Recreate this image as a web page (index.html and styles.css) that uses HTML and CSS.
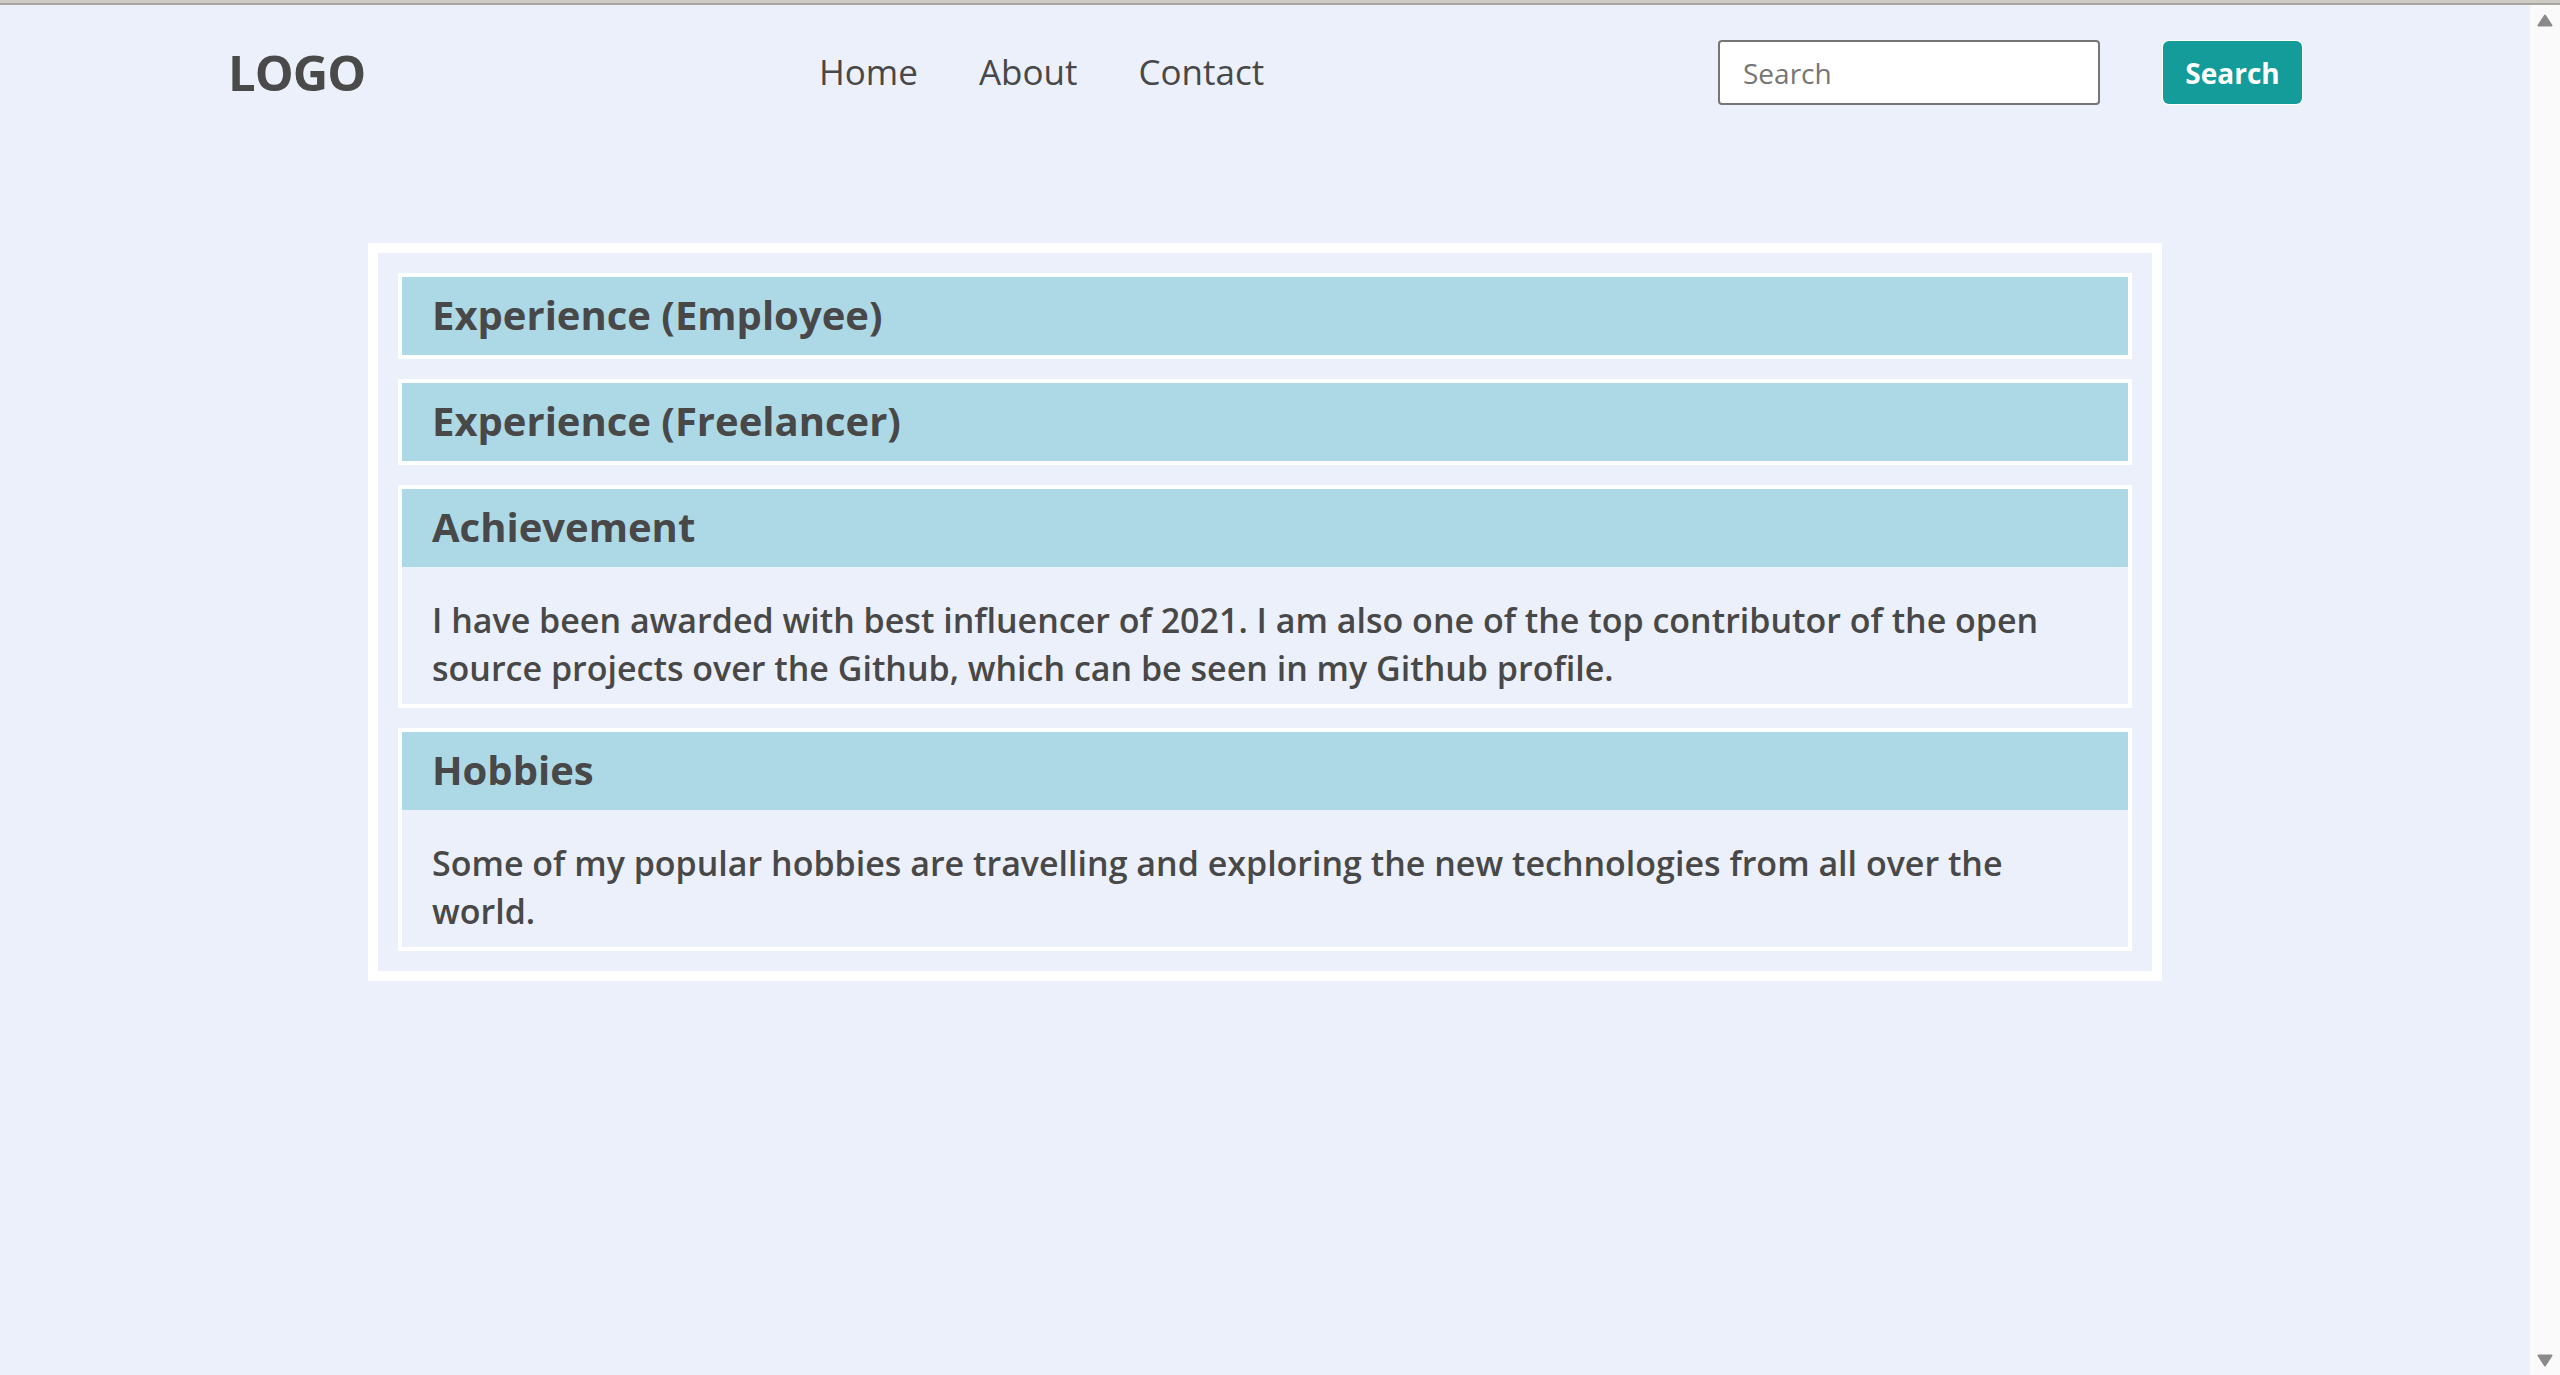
FILE: index.html
```html
<!DOCTYPE html>
<html lang="en">
<head>
<meta charset="utf-8">
<title>Profile</title>
<link rel="stylesheet" href="styles.css">
</head>
<body>
<div class="window">
  <div class="chrome-top"></div>
  <div class="viewport">
    <div class="page">
      <header class="site-header">
        <div class="logo">LOGO</div>
        <nav class="nav">
          <a href="#" class="nav-link">Home</a>
          <a href="#" class="nav-link">About</a>
          <a href="#" class="nav-link">Contact</a>
        </nav>
        <form class="search" onsubmit="return false">
          <input class="search-input" type="text" placeholder="Search">
          <button class="search-btn" type="submit">Search</button>
        </form>
      </header>
      <main class="card">
        <section class="item">
          <h2 class="item-title">Experience (Employee)</h2>
        </section>
        <section class="item">
          <h2 class="item-title">Experience (Freelancer)</h2>
        </section>
        <section class="item">
          <h2 class="item-title">Achievement</h2>
          <p class="item-body">I have been awarded with best influencer of 2021. I am also one of the top contributor of the open source projects over the Github, which can be seen in my Github profile.</p>
        </section>
        <section class="item">
          <h2 class="item-title">Hobbies</h2>
          <p class="item-body">Some of my popular hobbies are travelling and exploring the new technologies from all over the world.</p>
        </section>
      </main>
    </div>
    <div class="scrollbar">
      <svg class="arrow" width="16" height="13" viewBox="0 0 16 13"><polygon points="8,1.5 14.5,11.5 1.5,11.5" fill="#8a8a8a" stroke="#8a8a8a" stroke-width="2" stroke-linejoin="round"/></svg>
      <svg class="arrow" width="16" height="13" viewBox="0 0 16 13"><polygon points="1.5,1.5 14.5,1.5 8,11.5" fill="#8a8a8a" stroke="#8a8a8a" stroke-width="2" stroke-linejoin="round"/></svg>
    </div>
  </div>
</div>
</body>
</html>
```

FILE: styles.css
```css
html, body {
  margin: 0;
  padding: 0;
}

body {
  font-family: "Open Sans", "Noto Sans", sans-serif;
  color: #484848;
  background: #ecf0fb;
}

.window {
  display: flex;
  flex-direction: column;
  height: 1375px;
  overflow: hidden;
}

.chrome-top {
  flex: none;
  height: 5px;
  background: linear-gradient(#cdc9c5 0 3px, #a9a5a1 3px 5px);
}

.viewport {
  flex: 1;
  display: flex;
  min-height: 0;
}

.page {
  flex: 1;
  min-width: 0;
}

.scrollbar {
  flex: none;
  width: 30px;
  background: #fafafa;
  display: flex;
  flex-direction: column;
  justify-content: space-between;
  align-items: center;
  padding: 9px 0 8px;
  box-sizing: border-box;
}

.arrow {
  display: block;
}

/* Header */
.site-header {
  height: 135px;
  display: flex;
  align-items: center;
  justify-content: space-between;
  padding: 0 228px;
}

.logo {
  font-size: 49px;
  font-weight: 700;
  letter-spacing: -1px;
  color: #4a4a4a;
  padding-bottom: 2px;
}

.nav {
  display: flex;
  gap: 61px;
  padding-bottom: 2px;
}

.nav-link {
  font-size: 35px;
  color: #484848;
  text-decoration: none;
}

.search {
  display: flex;
  align-items: center;
  gap: 63px;
  margin: 0;
}

.search-input {
  width: 382px;
  height: 65px;
  box-sizing: border-box;
  border: 2px solid #767676;
  border-radius: 4px;
  background: #fff;
  padding: 0 0 0 23px;
  font-family: inherit;
  font-size: 28px;
  color: #484848;
  outline: none;
}

.search-input::placeholder {
  color: #757575;
}

.search-btn {
  width: 139px;
  height: 63px;
  border: none;
  border-radius: 6px;
  background: #139c9a;
  box-shadow: 0 0 0 1px #fff;
  color: #fff;
  font-family: inherit;
  font-size: 28px;
  font-weight: 700;
  padding: 0;
  cursor: pointer;
}

/* Card */
.card {
  width: 1734px;
  margin: 103px auto 0;
  border: 10px solid #fff;
  padding: 20px;
  display: flex;
  flex-direction: column;
  gap: 20px;
}

.item {
  border: 4px solid #fff;
}

.item-title {
  margin: 0;
  height: 78px;
  box-sizing: border-box;
  display: flex;
  align-items: center;
  padding: 0 30px 3px;
  background: #add8e6;
  font-size: 40px;
  font-weight: 700;
  color: #484848;
}

.item-body {
  margin: 0;
  padding: 29px 30px 12px;
  font-size: 34px;
  line-height: 48px;
  font-weight: 600;
  color: #484848;
}
```
